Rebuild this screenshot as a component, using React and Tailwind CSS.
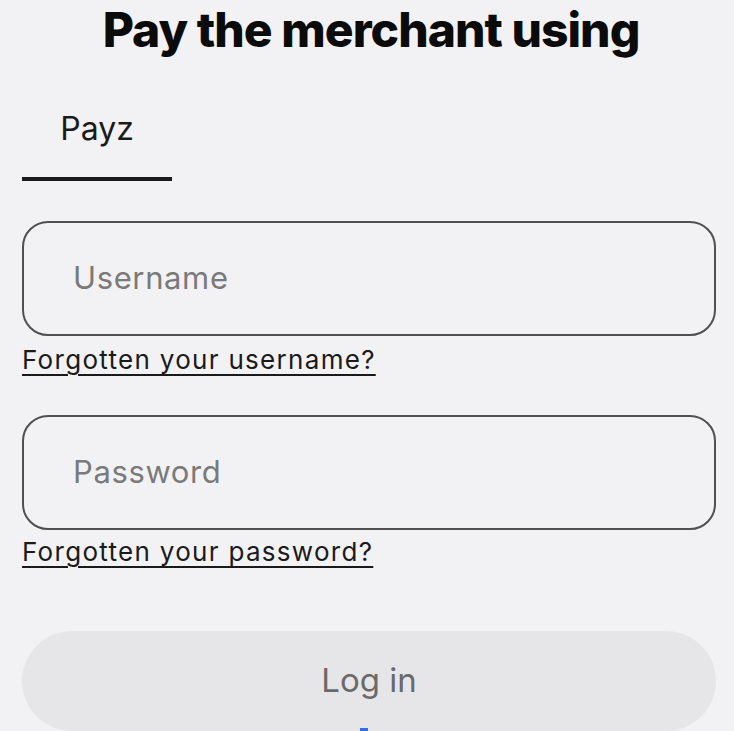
export default function App() {
  return (
    <div className="min-h-screen bg-[#f2f2f4] font-['Inter','Liberation_Sans',sans-serif] overflow-hidden">
      <div className="pl-[22px] pr-[18px] pt-[6px]">
        {/* Title */}
        <h1 className="pl-[4px] text-center text-[48px] leading-none font-extrabold tracking-[-0.02em] text-[#0b0b0b]">
          Pay the merchant using
        </h1>

        {/* Tabs */}
        <div className="mt-[59px] flex">
          <div className="w-[150px] border-b-[4px] border-[#1a1a1a] pb-[32px] text-center text-[32px] leading-none text-[#1a1a1a]">
            Payz
          </div>
        </div>

        {/* Username */}
        <div className="mt-[40px] flex h-[115px] items-center rounded-[26px] border-2 border-[#505050] pl-[49px]">
          <input
            placeholder="Username"
            className="w-full bg-transparent text-[31px] tracking-[0.02em] text-[#1a1a1a] outline-none placeholder:text-[#7a7a7a]"
          />
        </div>
        <a href="#" className="mt-[11px] block w-fit text-[26px] leading-none tracking-[0.05em] text-[#1a1a1a] underline underline-offset-[5px] decoration-[2px]">
          Forgotten your username?
        </a>

        {/* Password */}
        <div className="mt-[42px] flex h-[115px] items-center rounded-[26px] border-2 border-[#505050] pl-[49px]">
          <input
            type="password"
            placeholder="Password"
            className="w-full bg-transparent text-[31px] tracking-[0.02em] text-[#1a1a1a] outline-none placeholder:text-[#7a7a7a]"
          />
        </div>
        <a href="#" className="mt-[9px] block w-fit text-[26px] leading-none tracking-[0.05em] text-[#1a1a1a] underline underline-offset-[5px] decoration-[2px]">
          Forgotten your password?
        </a>

        {/* Log in */}
        <div className="relative mt-[66px]">
          <button className="flex h-[100px] w-full items-center justify-center rounded-full bg-[#e6e6e8] text-[33px] text-[#6a6a6a]">
            Log in
          </button>
          <span className="absolute left-[338px] top-[97px] h-[3px] w-[8px] bg-[#2f6fe0]" />
        </div>
      </div>
    </div>
  );
}
